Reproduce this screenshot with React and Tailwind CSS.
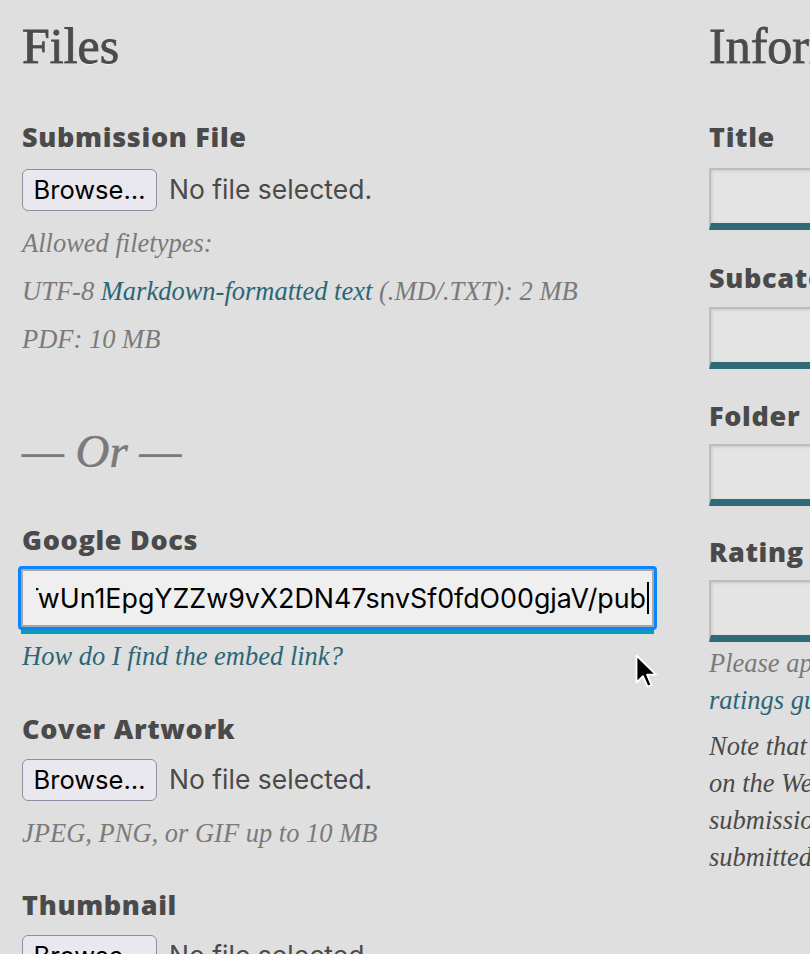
import React from "react";

const serif = "font-['Liberation_Serif','Times_New_Roman',serif]";
const sys = "font-['Inter','Liberation_Sans',sans-serif]";

function Label({ className = "", children }) {
  return (
    <div
      className={`font-['Open_Sans','Noto_Sans',sans-serif] text-[27px] font-extrabold leading-[34px] tracking-[0.025em] text-[#4a4a4a] whitespace-nowrap ${className}`}
    >
      {children}
    </div>
  );
}

function Hint({ className = "", children }) {
  return (
    <p className={`${serif} text-[26.5px] italic leading-[30px] text-[#7a7a7a] whitespace-nowrap ${className}`}>
      {children}
    </p>
  );
}

function FilePicker({ className = "" }) {
  return (
    <div className={`flex items-center gap-3 ${className}`}>
      <button className={`${sys} h-[42px] w-[135px] rounded-[6px] border-[1.5px] border-[#8f8d9e] bg-[#e9e8ee] text-[25.5px] text-black`}>
        Browse…
      </button>
      <span className={`${sys} text-[26.5px] text-[#4a4a4a]`}>No file selected.</span>
    </div>
  );
}

function TextField({ className = "" }) {
  return (
    <div
      className={`h-[62px] border-2 border-b-[7px] border-[#bdbdbd] border-b-[#2e6a78] bg-[#e4e4e4] shadow-[inset_1px_1px_3px_rgba(0,0,0,0.12)] ${className}`}
    />
  );
}

const heading = `${serif} text-[50px] leading-[56px] text-[#4b4b4b] [-webkit-text-stroke:0.8px_#4b4b4b] [text-shadow:0_1px_0_#fff]`;

export default function App() {
  return (
    <div className="relative h-[954px] w-[810px] overflow-hidden bg-[#dfdfdf]">
      <div className="flex w-[1300px] gap-[53px] pl-[22px]">
        {/* left column */}
        <div className="w-[634px] shrink-0">
          <h1 className={`${heading} mt-[18px]`}>Files</h1>

          <Label className="mt-[46px]">Submission File</Label>
          <FilePicker className="mt-[15px]" />
          <Hint className="mt-[17px]">Allowed filetypes:</Hint>
          <Hint className="mt-[18px]">
            UTF-8 <a className="text-[#2b6676]">Markdown-formatted text</a> (.MD/.TXT): 2 MB
          </Hint>
          <Hint className="mt-[18px]">PDF: 10 MB</Hint>

          <div className={`${serif} mt-[69px] text-[47px] italic leading-[56px] text-[#7a7a7a] [-webkit-text-stroke:0.6px_#7a7a7a] [text-shadow:0_1px_0_#fff]`}>
            — Or —
          </div>

          <Label className="mt-[44px]">Google Docs</Label>
          <div className="-ml-[4px] mt-[9px] w-[639px]">
            <div className="rounded-[4px] border-[3px] border-[#0a84ff] bg-[#a8a8a8] p-[2px]">
              <div className="flex h-[54px] items-center bg-[#efefef] pl-[13px] pr-[3px]">
                <div className="flex min-w-0 flex-1 items-center justify-end overflow-hidden">
                  <span className={`${sys} shrink-0 whitespace-nowrap text-[26.8px] text-black`}>
                    https://docs.google.com/document/d/e/2PACX-1vTwUn1EpgYZZw9vX2DN47snvSf0fdO00gjaV/pub
                  </span>
                </div>
                <span className="ml-[1px] h-[32px] w-[2px] shrink-0 bg-black" />
              </div>
            </div>
            <div className="mx-[3px] h-[4px] bg-[#0c9abb]" />
          </div>
          <p className={`${serif} mt-[7px] text-[26.5px] italic leading-[30px] text-[#2b6676]`}>
            How do I find the embed link?
          </p>

          <Label className="mt-[41px]">Cover Artwork</Label>
          <FilePicker className="mt-[13px]" />
          <Hint className="mt-[17px]">JPEG, PNG, or GIF up to 10 MB</Hint>

          <Label className="mt-[40px]">Thumbnail</Label>
          <FilePicker className="mt-[13px]" />
        </div>

        {/* right column */}
        <div className="w-[520px] shrink-0">
          <h1 className={`${heading} mt-[18px]`}>Information</h1>
          <Label className="mt-[46px]">Title</Label>
          <TextField className="mt-[14px]" />
          <Label className="mt-[31px]">Subcategory</Label>
          <TextField className="mt-[12px]" />
          <Label className="mt-[30px]">Folder</Label>
          <TextField className="mt-[11px]" />
          <Label className="mt-[29px]">Rating</Label>
          <TextField className="mt-[11px]" />
          <p className={`${serif} mt-[3px] text-[26.5px] italic leading-[37px] text-[#7a7a7a] whitespace-nowrap`}>
            Please apply the appropriate rating per our
            <br />
            <a className="text-[#2b6676]">ratings guidelines</a>.
          </p>
          <p className={`${serif} mt-[9px] text-[26.5px] italic leading-[37px] text-[#4a4a4a] whitespace-nowrap`}>
            Note that ratings are shown to readers
            <br />
            on the Web site, and that each
            <br />
            submission is rated as it was
            <br />
            submitted.
          </p>
        </div>
      </div>

      {/* mouse pointer */}
      <svg
        className="pointer-events-none absolute left-[635px] top-[654px]"
        width="24"
        height="36"
        viewBox="0 0 16 24"
      >
        <path
          d="M1 1 L1 19 L5.3 14.8 L8.4 21.8 L11 20.7 L8 13.8 L14 13.8 Z"
          fill="#000"
          stroke="#fff"
          strokeWidth="1.2"
          strokeLinejoin="round"
        />
      </svg>
    </div>
  );
}
